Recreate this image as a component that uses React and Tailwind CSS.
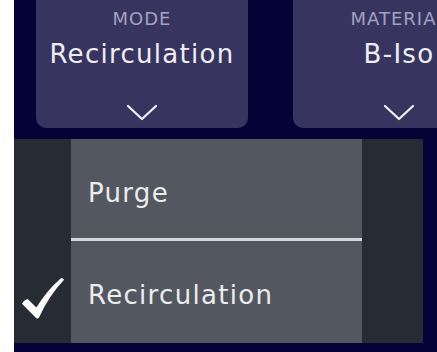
const Chevron = () => (
  <svg width="32" height="18" viewBox="0 0 32 18" fill="none">
    <path d="M2 2 L16 15 L30 2" stroke="#f2f2f5" strokeWidth="2.2" strokeLinecap="round" strokeLinejoin="round" />
  </svg>
);

const CheckMark = () => (
  <svg width="44" height="44" viewBox="0 0 46 46">
    <path
      d="M1 28 Q3 24 7 23 L16 32 Q27 14 42 1 Q44 1 45 3 Q29 20 19 42 Q17 45 15 42 Z"
      fill="#ffffff"
    />
  </svg>
);

const SelectBox = ({ label, value }) => (
  <div className="flex h-[128px] w-[212px] shrink-0 flex-col items-center rounded-b-[10px] bg-[#37355f] pt-[8px]">
    <span className="text-[18px] leading-[21px] tracking-[1px] text-[#a3a2c2]">{label}</span>
    <span className="mt-[10px] text-[26px] leading-[30px] tracking-[1.3px] text-[#eeeef2]">{value}</span>
    <div className="mt-auto mb-[6px]">
      <Chevron />
    </div>
  </div>
);

export default function App() {
  return (
    <div
      className="flex h-[352px] w-[437px] overflow-hidden bg-white pl-[14px]"
      style={{ fontFamily: '"DejaVu Sans", sans-serif' }}
    >
      <div className="flex flex-1 flex-col overflow-hidden bg-[#050238]">
        <div className="flex gap-[45px] pl-[22px]">
          <SelectBox label="MODE" value="Recirculation" />
          <SelectBox label="MATERIAL" value="B-Iso" />
        </div>

        <div className="mt-[11px] grid h-[204px] w-[409px] grid-cols-[57px_291px_61px] bg-[#262b34]">
          <div className="flex flex-col">
            <div className="h-[102px]" />
            <div className="flex flex-1 items-center justify-center pt-[14px]">
              <CheckMark />
            </div>
          </div>
          <div className="flex flex-col bg-[#535860]">
            <div className="flex h-[99px] items-center pl-[17px] pt-[9px] text-[26px] tracking-[1.3px] text-[#ececee]">Purge</div>
            <div className="h-[3px] bg-[#d3d5da]" />
            <div className="flex flex-1 items-center pl-[17px] pt-[7px] text-[26px] tracking-[1.3px] text-[#ececee]">Recirculation</div>
          </div>
          <div />
        </div>
      </div>
    </div>
  );
}
